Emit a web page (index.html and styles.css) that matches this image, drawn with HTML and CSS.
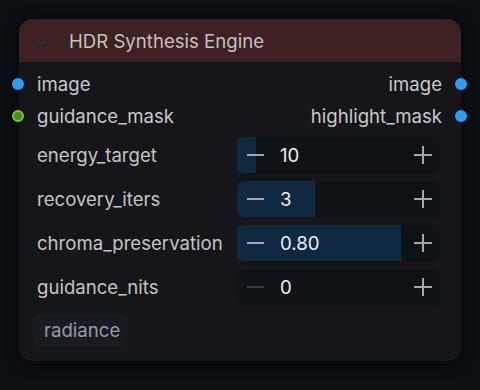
FILE: index.html
```html
<!DOCTYPE html>
<html>
<head>
<meta charset="utf-8">
<link rel="stylesheet" href="styles.css">
</head>
<body>
<div class="node">
  <div class="header">
    <svg class="chev" width="13" height="9" viewBox="0 0 13 9"><path d="M1.5 2 L6.5 7 L11.5 2" fill="none" stroke="#2c303d" stroke-width="2" stroke-linecap="round" stroke-linejoin="round"/></svg>
    <span class="title">HDR Synthesis Engine</span>
  </div>
  <div class="body">
    <div class="slot">
      <span class="dot in blue"></span>
      <span class="slot-l">image</span>
      <span class="slot-r">image</span>
      <span class="dot out blue"></span>
    </div>
    <div class="slot">
      <span class="dot in green"></span>
      <span class="slot-l">guidance_mask</span>
      <span class="slot-r">highlight_mask</span>
      <span class="dot out blue"></span>
    </div>
    <div class="widgets">
      <div class="wrow">
        <span class="wlabel">energy_target</span>
        <div class="num">
          <div class="fill" style="width:19px"></div>
          <span class="minus"></span>
          <span class="val">10</span>
          <span class="plus"></span>
        </div>
      </div>
      <div class="wrow">
        <span class="wlabel">recovery_iters</span>
        <div class="num">
          <div class="fill" style="width:78px"></div>
          <span class="minus"></span>
          <span class="val">3</span>
          <span class="plus"></span>
        </div>
      </div>
      <div class="wrow">
        <span class="wlabel">chroma_preservation</span>
        <div class="num">
          <div class="fill" style="width:164px"></div>
          <span class="minus"></span>
          <span class="val">0.80</span>
          <span class="plus"></span>
        </div>
      </div>
      <div class="wrow">
        <span class="wlabel">guidance_nits</span>
        <div class="num">
          <span class="minus dim"></span>
          <span class="val">0</span>
          <span class="plus"></span>
        </div>
      </div>
    </div>
    <div class="chip">radiance</div>
  </div>
</div>
</body>
</html>
```
FILE: styles.css
```css
* { box-sizing: border-box; }
html, body { margin: 0; padding: 0; }
body {
  width: 480px;
  height: 390px;
  background: #0c0f14;
  font-family: Inter, "Noto Sans", sans-serif;
  font-size: 18.6px;
  overflow: hidden;
}
.node {
  margin: 19px 0 0 19px;
  width: 442px;
  height: 342px;
  background: #161519;
  border-radius: 14px;
  box-shadow: 0 2px 14px rgba(0,0,0,0.55);
  display: flex;
  flex-direction: column;
}
.header {
  height: 43px;
  background: #3e2123;
  border-radius: 14px 14px 0 0;
  display: flex;
  align-items: center;
  padding-left: 16px;
  gap: 21px;
}
.chev { flex: none; margin-top: 2px; }
.title { color: #c9bfc0; }
.body {
  padding: 6px 0 14px 0;
  display: flex;
  flex-direction: column;
}
.slot {
  position: relative;
  height: 32px;
  display: flex;
  align-items: center;
  justify-content: space-between;
  padding: 0 19px 0 18px;
  color: #c8c8cc;
}
.dot {
  position: absolute;
  top: 10px;
  width: 12px;
  height: 12px;
  border-radius: 50%;
}
.dot.in { left: -7px; }
.dot.out { right: -6px; }
.blue { background: #2f9cf0; }
.green { background: #4f8a1c; border: 2.5px solid #79c72e; }
.widgets {
  margin-top: 5px;
  display: flex;
  flex-direction: column;
  gap: 8px;
}
.wrow {
  display: grid;
  grid-template-columns: 1fr 203px;
  align-items: center;
  height: 36px;
  padding: 0 21px 0 18px;
}
.wlabel { color: #c4c4c8; }
.num {
  position: relative;
  height: 36px;
  background: #0f1217;
  border-radius: 6px;
  overflow: hidden;
  display: flex;
  align-items: center;
  padding: 0 8px 0 10px;
}
.fill {
  position: absolute;
  left: 0; top: 0; bottom: 0;
  background: #0f2940;
}
.minus {
  position: relative;
  width: 17px;
  height: 2px;
  background: #a4a8ae;
  flex: none;
}
.minus.dim { background: #3a3d44; }
.val {
  position: relative;
  margin-left: 16px;
  color: #eef0f2;
  flex: 1;
}
.plus {
  position: relative;
  width: 18px;
  height: 18px;
  flex: none;
}
.plus::before, .plus::after {
  content: "";
  position: absolute;
  background: #a4a8ae;
}
.plus::before { left: 0; right: 0; top: 8px; height: 2px; }
.plus::after { top: 0; bottom: 0; left: 8px; width: 2px; }
.chip {
  margin: 8px 0 0 14px;
  align-self: flex-start;
  height: 34px;
  padding: 0 8px 0 11px;
  display: flex;
  align-items: center;
  background: #181b20;
  border-radius: 8px;
  color: #9a9ca2;
}
```
